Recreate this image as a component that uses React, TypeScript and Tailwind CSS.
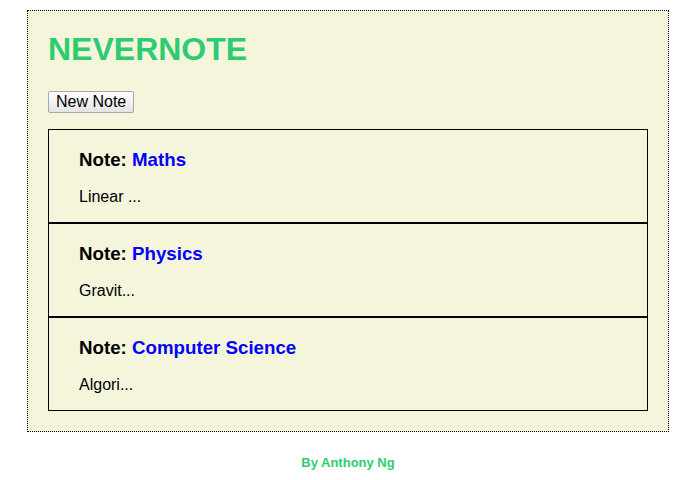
import { FC } from "react";

interface INoteProps {
  title: string;
  body: string;
}

const notes: INoteProps[] = [
  { title: "Maths", body: "Linear ..." },
  { title: "Physics", body: "Gravit..." },
  { title: "Computer Science", body: "Algori..." },
];

const Note: FC<INoteProps> = ({ title, body }) => {
  return (
    <li className="border border-black px-[30px] pt-[19px] pb-[16px]">
      <h3 className="text-[18.72px] leading-[21px] font-bold mb-[18px]">
        Note: <span className="text-[#0000ff]">{title}</span>
      </h3>
      <p className="text-[16px] leading-[18px]">{body}</p>
    </li>
  );
};

export default function App() {
  return (
    <div className="font-['Liberation_Sans',Arial,sans-serif] text-black bg-white min-h-[480px] pt-[10px]">
      <div className="mx-[27px] border border-dotted border-black bg-[#f5f5dc] p-5">
        <h1 className="text-[32px] leading-[37px] font-bold text-[#2ecc71]">NEVERNOTE</h1>
        <button className="mt-[23px] h-[22px] px-[7px] border border-[#a8a8a8] rounded-[2px] bg-gradient-to-b from-white to-[#e4e4e4] text-[16px] leading-[18px] text-black">
          New Note
        </button>
        <ul className="mt-[15px]">
          {notes.map((n) => (
            <Note key={n.title} title={n.title} body={n.body} />
          ))}
        </ul>
      </div>
      <footer className="mt-[23px] text-center text-[13px] leading-[15px] font-bold text-[#2ecc71]">
        By Anthony Ng
      </footer>
    </div>
  );
}
